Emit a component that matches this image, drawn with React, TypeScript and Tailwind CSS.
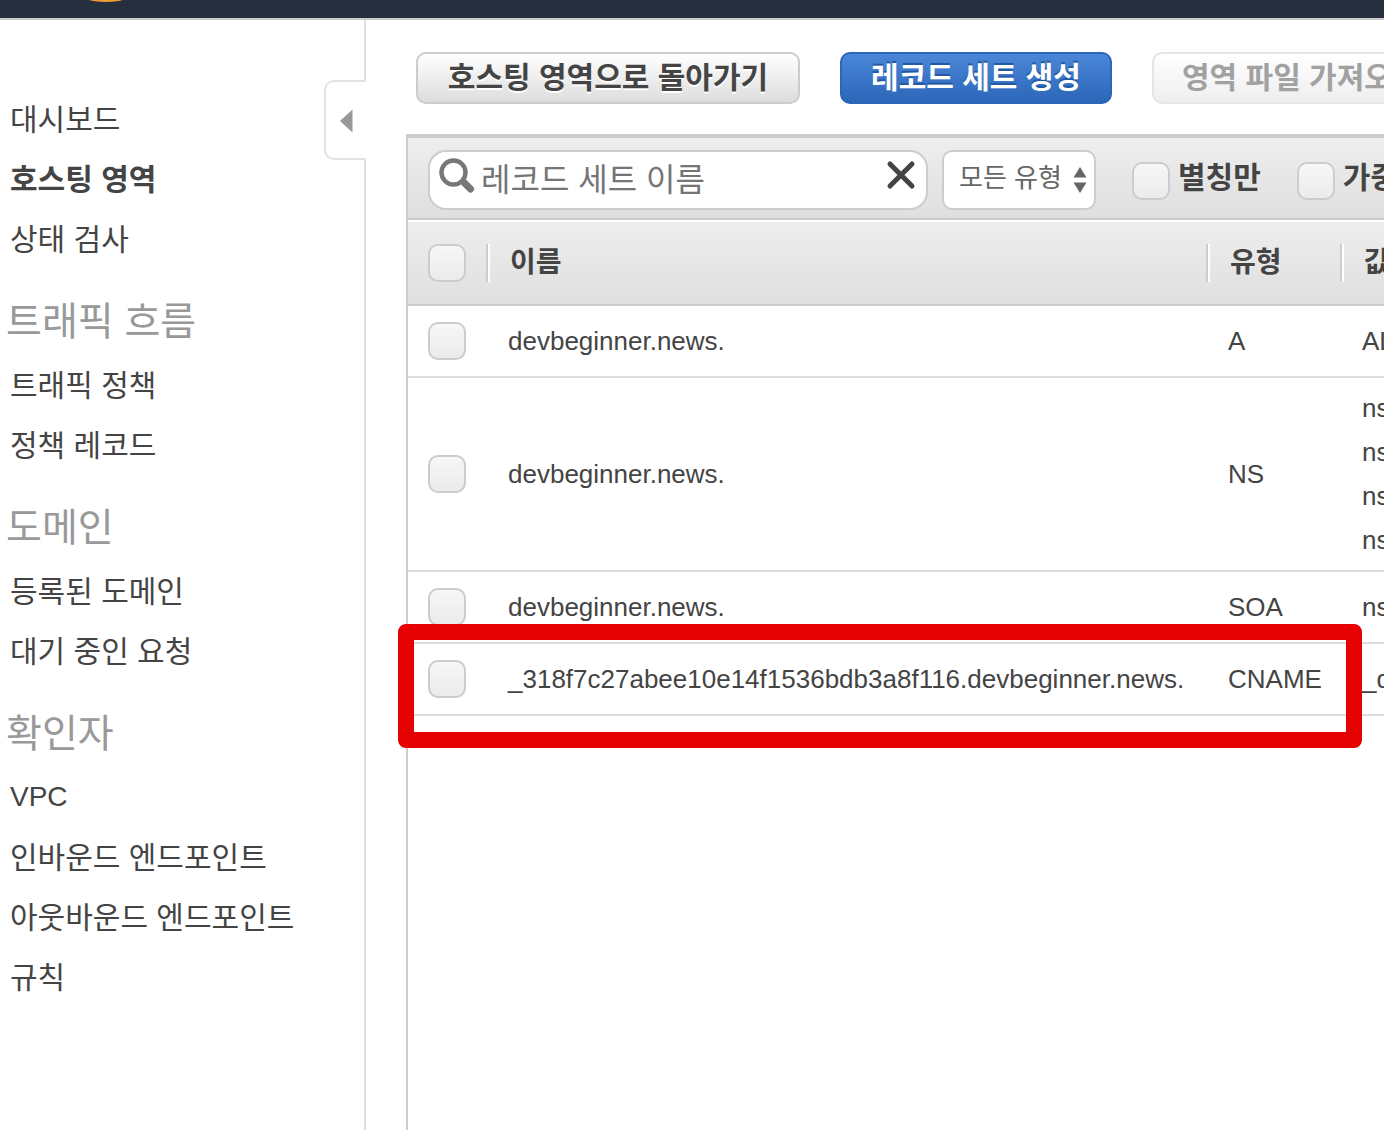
import type { ReactNode } from "react";

type NavGroup = { title?: string; items: string[] };

const NAV: NavGroup[] = [
  { items: ["대시보드", "호스팅 영역", "상태 검사"] },
  { title: "트래픽 흐름", items: ["트래픽 정책", "정책 레코드"] },
  { title: "도메인", items: ["등록된 도메인", "대기 중인 요청"] },
  {
    title: "확인자",
    items: ["VPC", "인바운드 엔드포인트", "아웃바운드 엔드포인트", "규칙"],
  },
];
const CURRENT = "호스팅 영역";

type RecordSet = { name: string; type: string; values: string[]; marked?: boolean };

const RECORDS: RecordSet[] = [
  { name: "devbeginner.news.", type: "A", values: ["ALIAS"] },
  { name: "devbeginner.news.", type: "NS", values: ["ns-", "ns-", "ns-", "ns-"] },
  { name: "devbeginner.news.", type: "SOA", values: ["ns-"] },
  {
    name: "_318f7c27abee10e14f1536bdb3a8f116.devbeginner.news.",
    type: "CNAME",
    values: ["_d"],
    marked: true,
  },
];

function Check({ id, label }: { id?: string; label?: string }) {
  return (
    <input
      type="checkbox"
      id={id}
      aria-label={label}
      className="block size-[38px] shrink-0 appearance-none rounded-[10px] border-2 border-[#cccccc] bg-linear-to-b from-[#f7f7f7] to-[#ebebeb] checked:from-[#4a86d8] checked:to-[#2c66b8]"
    />
  );
}

function HeaderCell({ children }: { children: ReactNode }) {
  return (
    <th scope="col" className="p-0 text-left font-bold whitespace-nowrap">
      <div className="flex h-[38px] items-center border-l-2 border-[#cccccc]">
        <span className="h-full w-0.5 shrink-0 bg-white" />
        <span className="pl-5">{children}</span>
      </div>
    </th>
  );
}

function TopBar() {
  return (
    <header className="h-5 shrink-0 overflow-hidden border-b-2 border-[#cccccc] bg-[#262f3e] pl-[82px]">
      <svg width="48" height="3" viewBox="0 0 48 3" className="block" aria-hidden="true">
        <ellipse cx="24" cy="-8" rx="28" ry="10" fill="#f39c36" />
      </svg>
    </header>
  );
}

function Sidebar() {
  return (
    <nav
      aria-label="Route 53"
      className="relative w-[366px] shrink-0 border-r-2 border-[#dddddd] pt-[69px] text-[30px]"
    >
      {NAV.map((group, i) => (
        <section key={i}>
          {group.title && (
            <h2 className="flex h-[86px] items-center pt-5 pl-1.5 text-[39px] text-[#999999]">
              {group.title}
            </h2>
          )}
          <ul>
            {group.items.map((item) => (
              <li key={item} className="flex h-[60px] items-center pl-2.5">
                <a
                  href="#"
                  aria-current={item === CURRENT ? "page" : undefined}
                  className={
                    item === CURRENT ? "font-bold" : item === "VPC" ? "text-[28px]" : undefined
                  }
                >
                  {item}
                </a>
              </li>
            ))}
          </ul>
        </section>
      ))}
      <button
        type="button"
        aria-label="메뉴 접기"
        className="absolute top-[60px] -right-0.5 flex h-20 w-[42px] items-center rounded-l-[10px] border-2 border-r-0 border-[#e2e2e2] bg-white pt-0.5 pl-3.5"
      >
        <svg width="13" height="24" viewBox="0 0 13 24" fill="#999999" aria-hidden="true">
          <path d="M0 12 12.5 .5v23z" />
        </svg>
      </button>
    </nav>
  );
}

function Actions() {
  return (
    <div className="flex gap-10 pl-[50px] text-[30px] leading-none font-bold whitespace-nowrap">
      <button
        type="button"
        className="h-[52px] w-96 shrink-0 rounded-[10px] border-2 border-[#cccccc] bg-linear-to-b from-white to-[#dddddd] [text-shadow:0_2px_0_#fff]"
      >
        호스팅 영역으로 돌아가기
      </button>
      <button
        type="button"
        className="h-[52px] w-[272px] shrink-0 rounded-[10px] border-2 border-[#2c66b8] bg-linear-to-b from-[#4a87d9] to-[#2c66b8] text-white [text-shadow:0_-2px_0_#2558a0]"
      >
        레코드 세트 생성
      </button>
      <button
        type="button"
        disabled
        className="h-[52px] shrink-0 rounded-[10px] border-2 border-[#e5e5e5] bg-linear-to-b from-white to-[#eeeeee] px-7 text-[#a1a1a1]"
      >
        영역 파일 가져오기
      </button>
    </div>
  );
}

function Filters() {
  return (
    <div className="flex h-[82px] items-start border-b-2 border-[#cccccc] bg-linear-to-b from-[#eeeeee] to-[#dfdfdf] pt-3 pl-5">
      <div className="flex h-[60px] w-[500px] shrink-0 items-center rounded-[18px] border-2 border-[#cccccc] bg-white pr-2.5 pl-[9px]">
        <svg width="36" height="36" viewBox="0 0 36 36" fill="none" stroke="#777777" className="mb-2 shrink-0" aria-hidden="true">
          <circle cx="14.5" cy="14.5" r="12" strokeWidth="4.500" />
          <path d="m23 22 3 4" strokeWidth="6" />
          <path d="m25.5 25 6 6" strokeWidth="7" strokeLinecap="round" />
        </svg>
        <input
          type="text"
          aria-label="레코드 세트 이름"
          placeholder="레코드 세트 이름"
          className="h-full min-w-0 flex-1 pl-1.5 text-[32px] outline-none placeholder:text-[#757575] placeholder:opacity-100"
        />
        <button type="button" aria-label="지우기" className="mb-2.5 shrink-0">
          <svg width="30" height="30" viewBox="0 0 30 30" fill="none" stroke="#444444" strokeWidth="5" strokeLinecap="round" aria-hidden="true">
            <path d="m4 4 22 22M26 4 4 26" />
          </svg>
        </button>
      </div>
      <div className="relative ml-3.5 shrink-0">
        <select
          aria-label="유형"
          className="h-[60px] w-[154px] appearance-none rounded-[10px] border-2 border-[#cccccc] bg-white pb-1 pl-[15px] text-[26px] text-[#666666]"
        >
          <option>모든 유형</option>
          <option>A</option>
          <option>NS</option>
          <option>SOA</option>
          <option>CNAME</option>
        </select>
        <svg width="14" height="26" viewBox="0 0 14 26" fill="#666666" className="pointer-events-none absolute top-[17px] right-[9px]" aria-hidden="true">
          <path d="M7 0 13.5 10.5H.5zM7 26 .5 15.500h13z" />
        </svg>
      </div>
      {["별칭만", "가중치 적용만"].map((label, i) => (
        <div key={label} className="ml-9 flex h-[62px] shrink-0 items-center gap-2">
          <Check id={`filter-${i}`} />
          <label htmlFor={`filter-${i}`} className="pb-1.5 text-[30px] leading-none font-bold whitespace-nowrap">
            {label}
          </label>
        </div>
      ))}
    </div>
  );
}

function Records() {
  return (
    <table className="w-full table-fixed border-collapse text-[26px] leading-[44px]">
      <colgroup>
        <col className="w-[78px]" />
        <col className="w-[720px]" />
        <col className="w-[134px]" />
        <col />
      </colgroup>
      <thead className="text-[28px] leading-none">
        <tr className="h-[86px] bg-linear-to-b from-[#eeeeee] to-[#dfdfdf] shadow-[inset_0_2px_0_#fff,inset_0_-2px_0_#ccc]">
          <th scope="col" className="p-0 pl-5">
            <Check label="모두 선택" />
          </th>
          <HeaderCell>이름</HeaderCell>
          <HeaderCell>유형</HeaderCell>
          <HeaderCell>값</HeaderCell>
        </tr>
      </thead>
      <tbody>
        {RECORDS.map((record, i) => (
          <tr key={i} className="h-[72px] whitespace-nowrap shadow-[inset_0_-2px_0_#ddd]">
            <td className="relative p-0 pb-0.5 pl-5">
              <Check label={record.name} />
              {record.marked && (
                <span className="pointer-events-none absolute -top-5 -left-2.5 z-10 h-[124px] w-[964px] rounded-lg border-[16px] border-[#e60202]" />
              )}
            </td>
            <td className="p-0 pb-0.5 pl-[22px]">{record.name}</td>
            <td className="p-0 pb-0.5 pl-[22px]">{record.type}</td>
            <td className="py-2 pr-0 pb-2.5 pl-[22px]">
              {record.values.map((value, n) => (
                <div key={n}>{value}</div>
              ))}
            </td>
          </tr>
        ))}
      </tbody>
    </table>
  );
}

export default function App() {
  return (
    <div className="flex min-h-screen flex-col overflow-hidden bg-white font-['Liberation_Sans','Noto_Sans_CJK_KR',sans-serif] text-[#444444]">
      <TopBar />
      <div className="flex flex-1">
        <Sidebar />
        <main className="flex min-w-0 flex-1 flex-col overflow-hidden pt-8">
          <Actions />
          <div className="mt-[30px] ml-10 flex-1 border-t-4 border-l-2 border-[#cccccc]">
            <Filters />
            <Records />
          </div>
        </main>
      </div>
    </div>
  );
}
